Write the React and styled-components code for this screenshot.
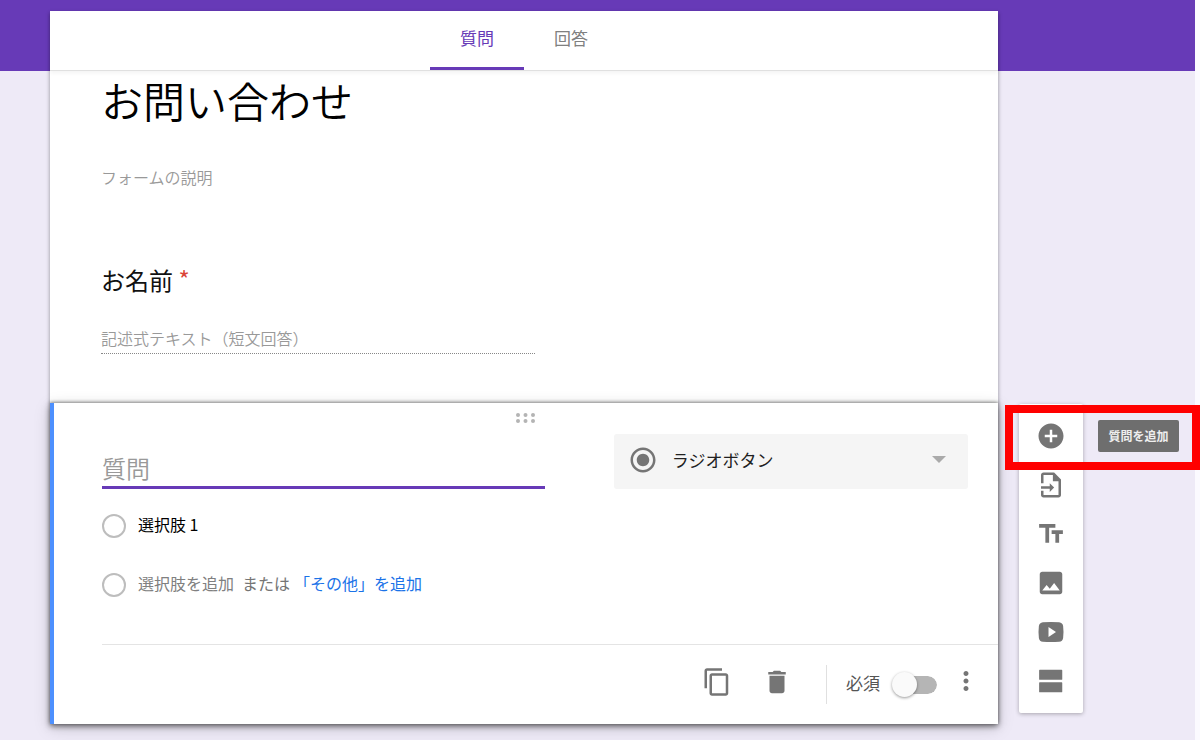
import { useState } from "react";
import styled, { createGlobalStyle } from "styled-components";

const tools = [
  {
    name: "質問を追加",
    path: "M12 2C6.48 2 2 6.48 2 12s4.48 10 10 10 10-4.48 10-10S17.52 2 12 2zm5 11h-4v4h-2v-4H7v-2h4V7h2v4h4v2z",
  },
  {
    name: "質問をインポート",
    path: "M14.500 2H6C4.900 2 4 2.900 4 4v6.500h2V4h7.500v5H18v11H6v-3.500H4V20c0 1.100.9 2 2 2h12c1.100 0 2-.9 2-2V7.500L14.500 2zM11 10.500V13H4v2h7v2.500l3.500-3.500L11 10.500z",
  },
  {
    name: "タイトルと説明を追加",
    path: "M2.500 4v3h5v12h3V7h5V4h-13zm19 5h-9v3h3v7h3v-7h3V9z",
  },
  {
    name: "画像を追加",
    path: "M21 19V5c0-1.100-.9-2-2-2H5c-1.100 0-2 .9-2 2v14c0 1.100.9 2 2 2h14c1.100 0 2-.9 2-2zM8.500 13.500l2.500 3.010L14.500 12l4.500 6H5l3.500-4.500z",
  },
  {
    name: "動画を追加",
    path: "M5.500 4.200Q12 3.800 18.500 4.200Q21.300 4.500 21.700 7.200Q22.300 12 21.700 16.800Q21.300 19.500 18.500 19.800Q12 20.200 5.500 19.800Q2.700 19.500 2.300 16.800Q1.700 12 2.300 7.200Q2.700 4.500 5.500 4.200zM10 8v8l6-4-6-4z",
  },
  {
    name: "セクションを追加",
    path: "M3 3h17.500q.5 0 .5.500v7q0 .5-.5.500H3q-.5 0-.5-.5v-7q0-.5.5-.5zM3 13h17.500q.5 0 .5.500v7q0 .5-.5.500H3q-.5 0-.5-.5v-7q0-.5.5-.5z",
  },
];

const copyPath =
  "M16 1H4c-1.100 0-2 .9-2 2v14h2V3h12V1zm3 4H8c-1.100 0-2 .9-2 2v14c0 1.100.9 2 2 2h11c1.100 0 2-.9 2-2V7c0-1.100-.9-2-2-2zm0 16H8V7h11v14z";
const deletePath =
  "M6 19c0 1.100.9 2 2 2h8c1.100 0 2-.9 2-2V7H6v12zM19 4h-3.500l-1-1h-5l-1 1H5v2h14V4z";
const morePath =
  "M12 8c1.100 0 2-.9 2-2s-.9-2-2-2-2 .9-2 2 .9 2 2 2zm0 2c-1.100 0-2 .9-2 2s.9 2 2 2 2-.9 2-2-.9-2-2-2zm0 6c-1.100 0-2 .9-2 2s.9 2 2 2 2-.9 2-2-.9-2-2-2z";
const radioPath =
  "M12 7c-2.760 0-5 2.240-5 5s2.240 5 5 5 5-2.240 5-5-2.240-5-5-5zm0-5C6.480 2 2 6.480 2 12s4.480 10 10 10 10-4.480 10-10S17.520 2 12 2zm0 18c-4.420 0-8-3.580-8-8s3.580-8 8-8 8 3.580 8 8-3.580 8-8 8z";

function Icon({ path }) {
  return (
    <IconSvg viewBox="0 0 24 24" aria-hidden="true">
      <path d={path} fillRule="evenodd" />
    </IconSvg>
  );
}

export default function App() {
  const [tab, setTab] = useState("questions");
  const [required, setRequired] = useState(false);

  return (
    <>
      <GlobalStyle />
      <Page>
        <Workspace>
          <Sheet>
            <Tabs role="tablist">
              <Tab
                role="tab"
                aria-selected={tab === "questions"}
                $active={tab === "questions"}
                onClick={() => setTab("questions")}
              >
                質問
              </Tab>
              <Tab
                role="tab"
                aria-selected={tab === "answers"}
                $active={tab === "answers"}
                onClick={() => setTab("answers")}
              >
                回答
              </Tab>
            </Tabs>
            <FormHead>
              <TitleInput aria-label="フォームのタイトル" defaultValue="お問い合わせ" />
              <DescriptionInput
                aria-label="フォームの説明"
                placeholder="フォームの説明"
              />
            </FormHead>
            <NameQuestion>
              <QuestionLabel htmlFor="name">
                お名前 <Asterisk>*</Asterisk>
              </QuestionLabel>
              <ShortAnswer
                id="name"
                placeholder="記述式テキスト（短文回答）"
                readOnly
              />
            </NameQuestion>
          </Sheet>

          <ActiveCard>
            <DragHandle viewBox="0 0 20 10" aria-hidden="true">
              <circle cx="2" cy="2" r="2" />
              <circle cx="9.500" cy="2" r="2" />
              <circle cx="17" cy="2" r="2" />
              <circle cx="2" cy="8" r="2" />
              <circle cx="9.500" cy="8" r="2" />
              <circle cx="17" cy="8" r="2" />
            </DragHandle>
            <QuestionRow>
              <QuestionInput aria-label="質問" placeholder="質問" />
              <SelectBox>
                <Icon path={radioPath} />
                <TypeSelect aria-label="質問の種類">
                  <option>ラジオボタン</option>
                </TypeSelect>
                <Arrow viewBox="0 0 14 7" aria-hidden="true">
                  <path d="M0 0h14L7 7z" />
                </Arrow>
              </SelectBox>
            </QuestionRow>
            <Options>
              <Option>
                <Radio type="radio" name="option" aria-label="選択肢 1" />
                <OptionInput aria-label="選択肢の名前" defaultValue="選択肢 1" />
              </Option>
              <Option>
                <Radio type="radio" name="option" aria-label="選択肢を追加" />
                <OptionButton>選択肢を追加</OptionButton>
                <Or>または</Or>
                <OptionButton $link>「その他」を追加</OptionButton>
              </Option>
            </Options>
            <CardFooter>
              <IconButton aria-label="コピーを作成">
                <Icon path={copyPath} />
              </IconButton>
              <IconButton aria-label="削除">
                <Icon path={deletePath} />
              </IconButton>
              <Divider />
              <SwitchLabel>
                <SwitchText>必須</SwitchText>
                <Switch
                  type="checkbox"
                  checked={required}
                  onChange={(e) => setRequired(e.target.checked)}
                />
              </SwitchLabel>
              <MoreButton aria-label="その他のオプション">
                <Icon path={morePath} />
              </MoreButton>
            </CardFooter>
          </ActiveCard>

          <Toolbar>
            {tools.map((tool) => (
              <ToolButton key={tool.name} aria-label={tool.name}>
                <Icon path={tool.path} />
              </ToolButton>
            ))}
            <Tooltip role="tooltip">質問を追加</Tooltip>
            <Highlight />
          </Toolbar>
        </Workspace>
      </Page>
    </>
  );
}

const GlobalStyle = createGlobalStyle`
  * {
    box-sizing: border-box;
  }

  body {
    margin: 0;
    background: #fbfaff;
    overflow-x: hidden;
  }

  body, button, input, select {
    font-family: "Noto Sans CJK JP", sans-serif;
    font-size: 16px;
  }

  button {
    padding: 0;
    border: none;
    background: none;
    cursor: pointer;
  }

  input {
    padding: 0;
    border: none;
    outline: none;
    background: none;
  }
`;

const Page = styled.div`
  min-height: 100vh;
  margin-right: 5px;
  padding: 11px 112px 16px 50px;
  background: linear-gradient(#673ab7 71px, #eeeaf7 71px);
`;

const Workspace = styled.main`
  display: grid;
  grid-template-columns: 1fr 64px;
  column-gap: 21px;
`;

const Sheet = styled.section`
  padding-bottom: 49px;
  background: #fff;
  box-shadow: 0 2px 4px rgba(0, 0, 0, 0.4);
`;

const Tabs = styled.div`
  display: flex;
  justify-content: center;
  height: 60px;
  border-bottom: 1px solid #e0e0e0;
  box-shadow: 0 2px 4px rgba(0, 0, 0, 0.05);
`;

const Tab = styled.button`
  width: 94px;
  padding-bottom: 4px;
  border-bottom: 3px solid ${(props) => (props.$active ? "#673ab7" : "transparent")};
  color: ${(props) => (props.$active ? "#673ab7" : "#808080")};
  font-size: 17px;
`;

const FormHead = styled.div`
  display: flex;
  flex-direction: column;
  padding: 0 51px;
`;

const TitleInput = styled.input`
  height: 56px;
  color: #000;
  font-size: 42px;
  font-weight: 350;
`;

const DescriptionInput = styled.input`
  height: 24px;
  margin-top: 38px;
  font-weight: 350;

  &::placeholder {
    color: #999;
  }
`;

const NameQuestion = styled.div`
  display: flex;
  flex-direction: column;
  align-items: flex-start;
  padding: 73px 51px 0;
`;

const QuestionLabel = styled.label`
  height: 36px;
  color: #111;
  font-size: 24px;
  line-height: 36px;
`;

const Asterisk = styled.span`
  color: #db4437;
  font-size: 24px;
  line-height: 24px;
  vertical-align: 1px;
`;

const ShortAnswer = styled.input`
  width: 434px;
  max-width: 100%;
  height: 32px;
  margin-top: 24px;
  border-bottom: 1px dotted #888;
  font-weight: 350;

  &::placeholder {
    color: #999;
  }
`;

const ActiveCard = styled.section`
  position: relative;
  grid-column: 1;
  display: flex;
  flex-direction: column;
  padding-top: 10px;
  border-left: 4px solid #4d90fe;
  background: #fff;
  box-shadow: 0 -1px 3px rgba(0, 0, 0, 0.3), 0 2px 6px rgba(0, 0, 0, 0.6),
    0 4px 16px rgba(0, 0, 0, 0.15);
`;

const DragHandle = styled.svg`
  align-self: center;
  width: 20px;
  height: 10px;
  fill: #b4b4b4;
`;

const QuestionRow = styled.div`
  display: grid;
  grid-template-columns: 5fr 4fr;
  column-gap: 69px;
  align-items: end;
  padding: 11px 30px 0 48px;
`;

const QuestionInput = styled.input`
  width: 100%;
  height: 40px;
  border-bottom: 3px solid #673ab7;
  font-size: 24px;
  font-weight: 350;

  &::placeholder {
    color: #999;
  }
`;

const SelectBox = styled.div`
  display: flex;
  align-items: center;
  height: 55px;
  padding: 0 22px 4px 14px;
  border-radius: 3px;
  background: #f5f5f5;
`;

const TypeSelect = styled.select`
  flex: 1;
  appearance: none;
  padding: 0 0 0 14px;
  border: none;
  outline: none;
  background: none;
  color: #212121;
  font-size: 17px;
`;

const Arrow = styled.svg`
  width: 14px;
  height: 7px;
  fill: #aaa;
`;

const Options = styled.div`
  padding: 7px 30px 0 48px;
`;

const Option = styled.div`
  display: flex;
  align-items: center;
  height: 59px;
`;

const Radio = styled.input`
  appearance: none;
  width: 24px;
  height: 24px;
  margin: 0 12px 0 0;
  border: 2px solid #bdbdbd;
  border-radius: 50%;
`;

const OptionInput = styled.input`
  flex: 1;
  padding-bottom: 4px;
  color: #000;
`;

const OptionButton = styled.button`
  padding-bottom: 4px;
  color: ${(props) => (props.$link ? "#1a73e8" : "#808080")};
`;

const Or = styled.span`
  padding-bottom: 4px;
  margin: 0 4px 0 8px;
  color: #757575;
`;

const CardFooter = styled.div`
  display: flex;
  align-items: center;
  justify-content: flex-end;
  height: 80px;
  margin: 30px 0 0 48px;
  padding-right: 17px;
  border-top: 1px solid #e4e4e4;
`;

const IconSvg = styled.svg`
  flex: none;
  display: block;
  width: 30px;
  height: 30px;
  fill: #757575;
`;

const IconButton = styled.button`
  padding: 0 15px 6px;
`;

const MoreButton = styled.button`
  margin-left: 14px;
  padding-bottom: 8px;
`;

const Divider = styled.div`
  width: 1px;
  height: 39px;
  margin: 0 19px;
  background: #e0e0e0;
`;

const SwitchLabel = styled.label`
  display: flex;
  align-items: center;
  gap: 12px;
  color: #555;
  font-size: 17px;
`;

const SwitchText = styled.span`
  padding-bottom: 4px;
`;

const Switch = styled.input`
  appearance: none;
  position: relative;
  width: 45px;
  height: 18px;
  margin: 0;
  border-left: 4px solid transparent;
  border-radius: 9px;
  background: #b5b5b5;
  background-clip: padding-box;
  cursor: pointer;

  &::before {
    content: "";
    position: absolute;
    top: -4px;
    left: ${(props) => (props.checked ? "17px" : "-4px")};
    width: 25px;
    height: 25px;
    border-radius: 50%;
    background: #fafafa;
    box-shadow: 0 1px 3px rgba(0, 0, 0, 0.4);
  }
`;

const Toolbar = styled.aside`
  position: relative;
  grid-column: 2;
  align-self: start;
  display: flex;
  flex-direction: column;
  margin-top: 1px;
  padding: 7px 0 8px;
  border-radius: 2px;
  background: #fff;
  box-shadow: 0 1px 4px rgba(0, 0, 0, 0.3);
`;

const ToolButton = styled.button`
  display: flex;
  align-items: center;
  justify-content: center;
  height: 49px;
`;

const Tooltip = styled.div`
  position: absolute;
  top: 16px;
  left: 79px;
  width: 81px;
  border-radius: 2px;
  background: #6e6e6e;
  color: #eee;
  font-size: 12px;
  font-weight: 700;
  line-height: 32px;
  text-align: center;
`;

const Highlight = styled.div`
  position: absolute;
  top: 1px;
  left: -14px;
  width: 195px;
  height: 65px;
  border: 8px solid #f00;
  pointer-events: none;
`;
